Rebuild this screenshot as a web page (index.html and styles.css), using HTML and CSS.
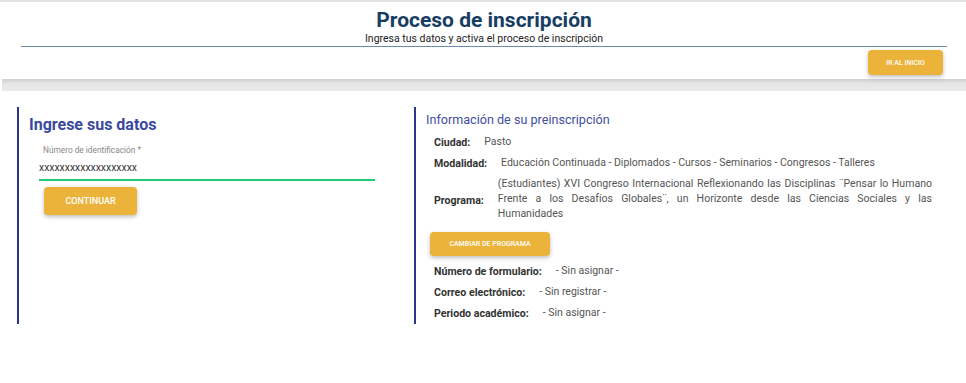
FILE: index.html
```html
<!DOCTYPE html>
<html>
<head>
    <link rel="stylesheet" href="styles.css">
</head>
<body>
    <div class="header">
        <h1 class="title">Proceso de inscripción</h1>
        <div class="subtitle">Ingresa tus datos y activa el proceso de inscripción</div>
    </div>

    <div class="toolbar">
        <button class="btn btn-home">IR AL INICIO</button>
    </div>
    <div class="shadow-bar"></div>

    <div class="content">
        <div class="panel panel-left">
            <h2 class="panel-title">Ingrese sus datos</h2>
            <div class="field">
                <label class="field-label">Número de identificación *</label>
                <input class="field-input" type="text" value="xxxxxxxxxxxxxxxxxxx">
            </div>
            <button class="btn btn-continue">CONTINUAR</button>
        </div>

        <div class="panel panel-right">
            <h3 class="info-title">Información de su preinscripción</h3>
            <div class="info-row">
                <span class="info-label">Ciudad:</span>
                <span class="info-value">Pasto</span>
            </div>
            <div class="info-row">
                <span class="info-label">Modalidad:</span>
                <span class="info-value">Educación Continuada - Diplomados - Cursos - Seminarios - Congresos - Talleres</span>
            </div>
            <div class="info-row">
                <span class="info-label">Programa:</span>
                <span class="info-value program">(Estudiantes) XVI Congreso Internacional Reflexionando las Disciplinas ¨Pensar lo Humano Frente a los Desafíos Globales¨, un Horizonte desde las Ciencias Sociales y las Humanidades</span>
            </div>
            <button class="btn btn-change">CAMBIAR DE PROGRAMA</button>
            <div class="info-row">
                <span class="info-label">Número de formulario:</span>
                <span class="info-value">- Sin asignar -</span>
            </div>
            <div class="info-row">
                <span class="info-label">Correo electrónico:</span>
                <span class="info-value">- Sin registrar -</span>
            </div>
            <div class="info-row">
                <span class="info-label">Periodo académico:</span>
                <span class="info-value">- Sin asignar -</span>
            </div>
        </div>
    </div>
</body>
</html>
```

FILE: styles.css
```css
body {
    margin: 0;
    padding: 0;
    background: #fff;
    font-family: Roboto, "Liberation Sans", sans-serif;
    color: #333;
    border-top: 2px solid #e2e2e2;
}

.header {
    margin: 0 19px 0 21px;
    padding-top: 5px;
    text-align: center;
    border-bottom: 1px solid #6b8cae;
}

.title {
    margin: 0;
    font-size: 21px;
    line-height: 26px;
    font-weight: bold;
    color: #173d63;
}

.subtitle {
    font-size: 10.5px;
    line-height: 12px;
    color: #222;
    padding-bottom: 1px;
}

.toolbar {
    display: flex;
    justify-content: flex-end;
    padding: 3px 23px 3px 0;
}

.btn {
    background: #ebb33a;
    color: #fff;
    border: none;
    border-radius: 4px;
    font-family: Roboto, "Liberation Sans", sans-serif;
    font-weight: 500;
    cursor: pointer;
    box-shadow: 0 2px 4px rgba(0, 0, 0, 0.25);
}

.btn-home {
    width: 75px;
    height: 25px;
    font-size: 7px;
}

.shadow-bar {
    margin: 1px 0 0 2px;
    height: 12px;
    background: linear-gradient(#cfcfcf, #e6e6e6 40%, #ebebeb);
}

.content {
    display: grid;
    grid-template-columns: 397px 1fr;
    padding: 16px 33px 0 17px;
}

.panel {
    height: 217px;
    border-left: 2px solid #2c358c;
    box-sizing: border-box;
}

.panel-left {
    padding: 8px 0 0 10px;
}

.panel-title {
    margin: 0;
    font-size: 16px;
    line-height: 20px;
    font-weight: bold;
    color: #3b48a0;
}

.field {
    margin: 10px 0 0 10px;
    width: 336px;
}

.field-label {
    display: block;
    padding-left: 4px;
    font-size: 8.3px;
    color: #888;
}

.field-input {
    display: block;
    width: 100%;
    box-sizing: border-box;
    border: none;
    border-bottom: 2px solid #1fcb7a;
    padding: 6px 0 5px 0;
    font-family: Roboto, "Liberation Sans", sans-serif;
    font-size: 10.4px;
    color: #333;
    outline: none;
}

.btn-continue {
    margin: 6px 0 0 15px;
    width: 93px;
    height: 28px;
    font-size: 9px;
}

.panel-right {
    padding: 5px 0 0 10px;
}

.info-title {
    margin: 0 0 3px 0;
    font-size: 12.6px;
    line-height: 16px;
    font-weight: normal;
    color: #3f4fa0;
}

.info-row {
    display: flex;
    align-items: center;
    gap: 14px;
    padding-left: 8px;
    min-height: 21px;
}

.info-label {
    font-size: 10.6px;
    font-weight: bold;
    color: #333;
    padding-top: 2px;
    white-space: nowrap;
}

.info-value {
    font-size: 10.5px;
    color: #555;
}

.program {
    font-size: 10.55px;
    line-height: 15px;
    text-align: justify;
    padding: 3px 1px 5px 0;
}

.btn-change {
    margin: 6px 0 4px 4px;
    width: 120px;
    height: 24px;
    font-size: 7px;
}
```
